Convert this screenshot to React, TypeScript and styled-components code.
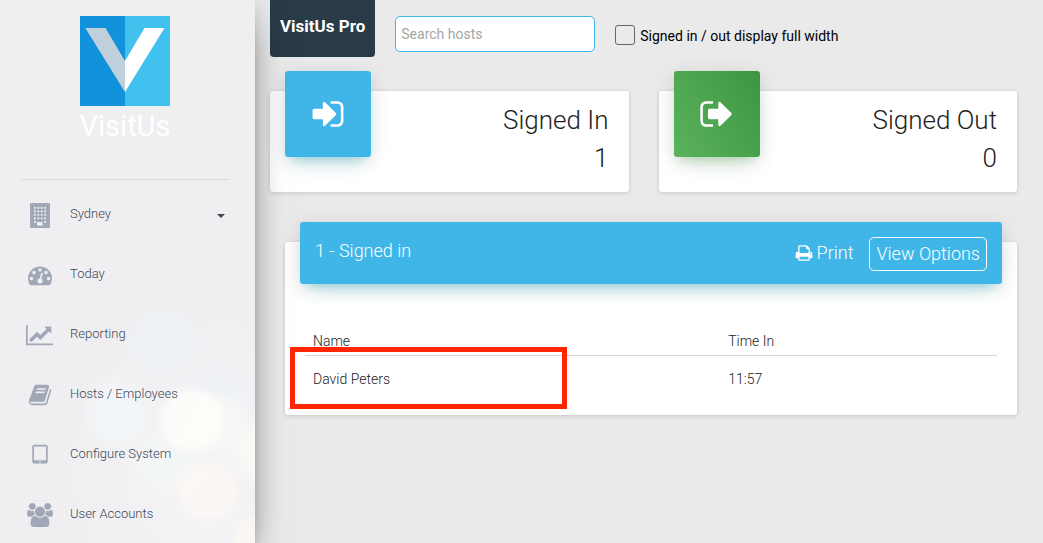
import React from "react";
import styled, { createGlobalStyle } from "styled-components";

const GlobalStyle = createGlobalStyle`
  * { box-sizing: border-box; }
  body {
    margin: 0;
    background: #eaeaea;
    color: #212121;
    font-family: Roboto, "Liberation Sans", sans-serif;
    font-size: 14px;
    font-weight: 300;
    line-height: 20px;
  }
  button, input, select { font: inherit; }
`;

const Page = styled.div`
  display: flex;
  min-height: 100vh;
`;

const Sidebar = styled.aside`
  flex: 0 0 255px;
  z-index: 1;
  color: #3c4858;
  background:
    radial-gradient(circle at 192px 420px, rgba(255, 253, 250, 0.9) 26px, rgba(255, 253, 250, 0) 36px),
    radial-gradient(circle at 208px 490px, rgba(252, 248, 245, 0.8) 24px, rgba(252, 248, 245, 0) 36px),
    radial-gradient(circle at 262px 545px, rgba(253, 247, 242, 0.8) 24px, rgba(253, 247, 242, 0) 36px),
    radial-gradient(circle at 216px 425px, rgba(250, 249, 247, 0.7) 22px, rgba(250, 249, 247, 0) 36px),
    radial-gradient(circle at 264px 450px, rgba(251, 250, 246, 0.8) 20px, rgba(251, 250, 246, 0) 40px),
    radial-gradient(circle at 116px 412px, rgba(243, 247, 249, 0.8) 20px, rgba(243, 247, 249, 0) 38px),
    radial-gradient(circle at 164px 342px, rgba(236, 242, 246, 0.8) 18px, rgba(236, 242, 246, 0) 36px),
    radial-gradient(circle at 168px 460px, rgba(243, 246, 247, 0.8) 20px, rgba(243, 246, 247, 0) 40px),
    radial-gradient(circle at 215px 400px, rgba(238, 241, 246, 0.8) 20px, rgba(238, 241, 246, 0) 40px),
    radial-gradient(circle at 220px 470px, rgba(243, 243, 245, 1) 60px, rgba(243, 243, 245, 0) 160px),
    #efeff1;
  box-shadow:
    0 16px 38px -12px rgba(0, 0, 0, 0.56),
    0 4px 25px rgba(0, 0, 0, 0.12),
    0 8px 10px -5px rgba(0, 0, 0, 0.2);
`;

const Brand = styled.a`
  display: flex;
  flex-direction: column;
  align-items: center;
  margin: 0 26px 0 21px;
  padding-top: 16px;
  height: 180px;
  border-bottom: 1px solid #d8d8da;
  color: #fff;
  font-size: 29px;
  font-weight: 400;
  line-height: 40px;
  text-decoration: none;
`;

const Nav = styled.nav`
  display: flex;
  flex-direction: column;
  padding: 4px 26px 0 21px;
`;

const NavLink = styled.a`
  display: flex;
  align-items: center;
  height: 60px;
  color: inherit;
  font-size: 13px;
  text-decoration: none;
`;

const NavIcon = styled.span`
  display: flex;
  justify-content: center;
  width: 37px;
  margin-right: 12px;
  padding-top: 2px;
  color: #a0a8b7;
`;

const Caret = styled.span`
  margin-left: auto;
  margin-right: 4px;
  margin-top: 4px;
  border: 4px solid transparent;
  border-top-color: #3c4858;
  border-bottom: 0;
`;

const Main = styled.main`
  flex: 1;
  min-width: 0;
  padding: 0 26px 0 15px;
`;

const Toolbar = styled.header`
  display: flex;
  align-items: flex-start;
  gap: 20px;
`;

const PlanBadge = styled.div`
  height: 57px;
  padding: 16px 10px;
  border-radius: 0 0 4px 4px;
  background: #293b47;
  color: #fff;
  font-size: 17px;
  font-weight: 700;
`;

const SearchInput = styled.input`
  width: 200px;
  height: 36px;
  margin-top: 16px;
  padding: 0 5px;
  border: 1px solid #40b6e8;
  border-radius: 5px;
  background: #fff;
  font-weight: 400;
  &::placeholder { color: #a5a5a5; opacity: 1; }
`;

const CheckLabel = styled.label`
  display: flex;
  align-items: center;
  gap: 5px;
  padding-top: 24px;
  color: #000;
  font-weight: 400;
`;

const CheckText = styled.span`
  padding-top: 2px;
`;

const Checkbox = styled.input`
  appearance: none;
  width: 20px;
  height: 20px;
  margin: 0;
  border: 1px solid #666;
  border-radius: 3px;
  &:checked { background: #40b6e8; }
`;

const Stats = styled.section`
  display: grid;
  grid-template-columns: 1fr 1fr;
  gap: 30px;
  margin-top: 34px;
`;

const Card = styled.article`
  border-radius: 3px;
  background: #fff;
  box-shadow: 0 1px 4px rgba(0, 0, 0, 0.16);
`;

const StatCard = styled(Card)`
  display: flex;
  justify-content: space-between;
  height: 101px;
  padding: 0 20px 0 15px;
`;

const StatIcon = styled.div<{ $green?: boolean }>`
  display: flex;
  align-items: center;
  justify-content: center;
  width: 86px;
  height: 86px;
  margin-top: -20px;
  border-radius: 3px;
  color: #fff;
  background: ${(p) => (p.$green ? "linear-gradient(60deg, #5bb25f, #3c963f)" : "#40b6e8")};
  box-shadow:
    0 12px 20px -10px ${(p) => (p.$green ? "rgba(76,175,80,.28)" : "rgba(0,172,193,.28)")},
    0 4px 20px rgba(0, 0, 0, 0.12),
    0 7px 8px -5px ${(p) => (p.$green ? "rgba(76,175,80,.2)" : "rgba(0,172,193,.2)")};
`;

const StatText = styled.h2`
  margin: 0;
  padding-top: 10px;
  font-size: 26px;
  font-weight: 300;
  line-height: 38px;
  text-align: right;
`;

const StatValue = styled.span`
  display: block;
`;

const Panel = styled(Card)`
  display: flow-root;
  margin: 50px 0 0 15px;
  padding: 0 15px 14px;
`;

const PanelHeader = styled.header`
  display: flex;
  align-items: flex-start;
  height: 62px;
  margin-top: -20px;
  padding: 15px;
  border-radius: 3px;
  background: #40b6e8;
  color: #fff;
  font-size: 18px;
  box-shadow:
    0 12px 20px -10px rgba(0, 172, 193, 0.28),
    0 4px 20px rgba(0, 0, 0, 0.12),
    0 7px 8px -5px rgba(0, 172, 193, 0.2);
`;

const PanelTitle = styled.h3`
  flex: 1;
  margin: 0;
  font-size: 18px;
  font-weight: 300;
  line-height: 28px;
`;

const PrintButton = styled.button`
  display: flex;
  align-items: center;
  gap: 4px;
  height: 32px;
  margin-right: 16px;
  padding: 0;
  border: 0;
  background: none;
  color: inherit;
`;

const OptionsButton = styled.button`
  height: 34px;
  padding: 0 6px;
  border: 1px solid #fff;
  border-radius: 5px;
  background: none;
  color: inherit;
`;

const Table = styled.table`
  width: calc(100% - 10px);
  margin: 43px 5px 0;
  border-collapse: separate;
  border-spacing: 0;
  table-layout: fixed;
`;

const HeadCell = styled.th`
  height: 29px;
  padding: 0 8px;
  border-bottom: 1px solid #d5d5d5;
  font-weight: 300;
  text-align: left;
  &:first-child { width: 60%; }
`;

const Cell = styled.td`
  position: relative;
  height: 45px;
  padding: 0 8px;
`;

const Highlight = styled.span`
  position: absolute;
  top: -9px;
  left: -15px;
  width: 277px;
  height: 62px;
  border: 5px solid #ff2500;
`;

const paths = {
  dashboard:
    "M384 1152q0-53-37.5-90.5t-90.5-37.5-90.5 37.5-37.5 90.5 37.5 90.5 90.5 37.5 90.5-37.5 37.5-90.5zm192-448q0-53-37.5-90.5t-90.5-37.5-90.5 37.5-37.5 90.5 37.5 90.5 90.5 37.5 90.5-37.5 37.5-90.5zm428 481l101-382q6-26-7.5-48.5t-38.5-29.5-48 6.5-30 39.5l-101 382q-60 5-107 43.5t-63 98.5q-20 77 20 146t117 89 146-20 89-117q16-60-6-117t-72-91zm660-33q0-53-37.5-90.5t-90.5-37.5-90.5 37.5-37.5 90.5 37.5 90.5 90.5 37.5 90.5-37.5 37.5-90.5zm-640-640q0-53-37.5-90.5t-90.5-37.5-90.5 37.5-37.5 90.5 37.5 90.5 90.5 37.5 90.5-37.5 37.5-90.5zm448 192q0-53-37.5-90.5t-90.5-37.5-90.5 37.5-37.5 90.5 37.5 90.5 90.5 37.5 90.5-37.5 37.5-90.5zm320 448q0 261-141 483-19 29-54 29h-1402q-35 0-54-29-141-221-141-483 0-182 71-348t191-286 286-191 348-71 348 71 286 191 191 286 71 348z",
  chart:
    "M2048 1536v128h-2048v-1536h128v1408h1920zm-128-1248v435q0 21-19.5 29.5t-35.5-7.5l-121-121-633 633q-10 10-23 10t-23-10l-233-233-416 416-192-192 585-585q10-10 23-10t23 10l233 233 464-464-121-121q-16-16-7.5-35.5t29.5-19.5h435q14 0 23 9t9 23z",
  book:
    "M1703 478q40 57 18 129l-275 906q-19 64-76.5 107.5t-122.5 43.5h-923q-77 0-148.5-53.5t-99.5-131.5q-24-67-2-127 0-4 3-27t4-37q1-8-3-21.5t-3-19.5q2-11 8-21t16.5-23.5 16.5-23.5q23-38 45-91.5t30-91.5q3-10 .5-30t-.5-28q3-11 17-28t17-23q21-36 42-92t25-90q1-9-2.5-32t.5-28q4-13 22-30.5t22-22.5q19-26 42.5-84.5t27.5-96.5q1-8-3-25.5t-2-26.5q2-8 9-18t18-23 17-21q8-12 16.5-30.5t15-35 16-36 19.5-32 26.5-23.5 36-11.5 47.5 5.5l-1 3q38-9 51-9h761q74 0 114 56t18 130l-274 906q-36 119-71.5 153.5t-128.5 34.5h-869q-27 0-38 15-11 16-1 43 24 70 144 70h923q29 0 56-15.5t35-41.5l300-987q7-22 5-57 38 15 59 43zm-1064 2q-4 13 2 22.5t20 9.5h608q13 0 25.5-9.5t16.5-22.5l21-64q4-13-2-22.5t-20-9.5h-608q-13 0-25.5 9.5t-16.5 22.5zm-83 256q-4 13 2 22.5t20 9.5h608q13 0 25.5-9.5t16.5-22.5l21-64q4-13-2-22.5t-20-9.5h-608q-13 0-25.5 9.5t-16.5 22.5z",
  tablet:
    "M960 1408q0-26-19-45t-45-19-45 19-19 45 19 45 45 19 45-19 19-45zm384-160v-960q0-13-9.5-22.5t-22.5-9.5h-832q-13 0-22.5 9.5t-9.5 22.5v960q0 13 9.5 22.5t22.5 9.5h832q13 0 22.5-9.5t9.5-22.5zm128-960v1088q0 66-47 113t-113 47h-832q-66 0-113-47t-47-113v-1088q0-66 47-113t113-47h832q66 0 113 47t47 113z",
  users:
    "M593 896q-162 5-265 128h-134q-82 0-138-40.5t-56-118.5q0-353 124-353 6 0 43.5 21t97.5 42.5 119 21.5q67 0 133-23-5 37-5 66 0 139 81 256zm1071 637q0 120-73 189.5t-194 69.5h-874q-121 0-194-69.5t-73-189.5q0-53 3.5-103.5t14-109 26.5-108.5 43-97.5 62-81 85.5-53.5 111.5-20q10 0 43 21.5t73 48 107 48 135 21.5 135-21.5 107-48 73-48 43-21.5q61 0 111.5 20t85.5 53.5 62 81 43 97.5 26.5 108.5 14 109 3.5 103.5zm-1024-1277q0 106-75 181t-181 75-181-75-75-181 75-181 181-75 181 75 75 181zm704 384q0 159-112.5 271.5t-271.5 112.5-271.5-112.5-112.5-271.5 112.5-271.5 271.5-112.5 271.5 112.5 112.5 271.5zm576 225q0 78-56 118.5t-138 40.5h-134q-103-123-265-128 81-117 81-256 0-29-5-66 66 23 133 23 59 0 119-21.5t97.5-42.5 43.5-21q124 0 124 353zm-128-609q0 106-75 181t-181 75-181-75-75-181 75-181 181-75 181 75 75 181z",
  print:
    "M448 1536h896v-256h-896v256zm0-640h896v-384h-160q-40 0-68-28t-28-68v-160h-640v640zm1152 64q0-26-19-45t-45-19-45 19-19 45 19 45 45 19 45-19 19-45zm128 0v416q0 13-9.5 22.5t-22.5 9.5h-224v160q0 40-28 68t-68 28h-960q-40 0-68-28t-28-68v-160h-224q-13 0-22.5-9.5t-9.5-22.5v-416q0-79 56.5-135.5t135.5-56.5h64v-544q0-40 28-68t68-28h672q40 0 88 20t76 48l152 152q28 28 48 76t20 88v256h64q79 0 135.5 56.5t56.5 135.5z",
  signIn:
    "M1312 896q0 26-19 45l-544 544q-19 19-45 19t-45-19-19-45v-288h-448q-26 0-45-19t-19-45v-384q0-26 19-45t45-19h448v-288q0-26 19-45t45-19 45 19l544 544q19 19 19 45zm352-352v704q0 119-84.5 203.5t-203.5 84.5h-320q-13 0-22.5-9.5t-9.5-22.5q0-4-1-20t-.5-26.5 3-23.5 10-19.5 20.5-6.5h320q66 0 113-47t47-113v-704q0-66-47-113t-113-47h-312l-11.5-1-11.5-3-8-5.5-7-9-2-13.5q0-4-1-20t-.5-26.5 3-23.5 10-19.5 20.5-6.5h320q119 0 203.5 84.5t84.5 203.5z",
  signOut:
    "M704 1440q0 4 1 20t.5 26.5-3 23.5-10 19.5-20.5 6.5h-320q-119 0-203.5-84.5t-84.5-203.5v-704q0-119 84.5-203.5t203.5-84.5h320q13 0 22.5 9.5t9.5 22.5q0 4 1 20t.5 26.5-3 23.5-10 19.5-20.5 6.5h-320q-66 0-113 47t-47 113v704q0 66 47 113t113 47h312l11.5 1 11.5 3 8 5.5 7 9 2 13.5zm928-544q0 26-19 45l-544 544q-19 19-45 19t-45-19-19-45v-288h-448q-26 0-45-19t-19-45v-384q0-26 19-45t45-19h448v-288q0-26 19-45t45-19 45 19l544 544q19 19 19 45z",
};

function Icon({ name, size, box = 1792 }: { name: keyof typeof paths; size: number; box?: number }) {
  return (
    <svg width={Math.round((size * box) / 1792)} height={size} viewBox={`0 0 ${box} 1792`} fill="currentColor" aria-hidden="true">
      <path d={paths[name]} />
    </svg>
  );
}

function BuildingIcon() {
  return (
    <svg width="20" height="25" viewBox="0 0 20 25" aria-hidden="true">
      <rect width="20" height="25" rx="1" fill="currentColor" />
      {[4, 7.5, 11, 14.5, 18].map((y) =>
        [4, 7.4, 10.8, 14.2].map((x) => <rect key={`${x}-${y}`} x={x} y={y} width="1.8" height="1.8" fill="#efeff1" />)
      )}
      <rect x="6.400" y="17.500" width="7" height="2" fill="currentColor" />
      <rect x="7" y="19" width="5.600" height="3.600" fill="#efeff1" />
    </svg>
  );
}

function Logo() {
  return (
    <svg width="90" height="90" viewBox="0 0 90 90" aria-hidden="true">
      <path fill="#1192da" d="M0 0h45v90H0z" />
      <path fill="#40c1ee" d="M45 0h45v90H45z" />
      <path fill="#bfcfdb" d="M5.300 12H25.500L45 45v31z" />
      <path fill="#fff" d="M84.500 12H64.500L45 45v31z" />
    </svg>
  );
}

const navItems = [
  { label: "Sydney", icon: <BuildingIcon />, caret: true },
  { label: "Today", icon: <Icon name="dashboard" size={24} /> },
  { label: "Reporting", icon: <Icon name="chart" size={24} box={2048} /> },
  { label: "Hosts / Employees", icon: <Icon name="book" size={24} /> },
  { label: "Configure System", icon: <Icon name="tablet" size={24} /> },
  { label: "User Accounts", icon: <Icon name="users" size={24} box={1920} /> },
];

export default function App() {
  return (
    <>
      <GlobalStyle />
      <Page>
        <Sidebar>
          <Brand href="#">
            <Logo />
            VisitUs
          </Brand>
          <Nav>
            {navItems.map((item) => (
              <NavLink href="#" key={item.label}>
                <NavIcon>{item.icon}</NavIcon>
                {item.label}
                {item.caret && <Caret />}
              </NavLink>
            ))}
          </Nav>
        </Sidebar>
        <Main>
          <Toolbar>
            <PlanBadge>VisitUs Pro</PlanBadge>
            <SearchInput type="search" placeholder="Search hosts" aria-label="Search hosts" />
            <CheckLabel>
              <Checkbox type="checkbox" />
              <CheckText>Signed in / out display full width</CheckText>
            </CheckLabel>
          </Toolbar>
          <Stats>
            <StatCard>
              <StatIcon><Icon name="signIn" size={36} /></StatIcon>
              <StatText>Signed In<StatValue>1</StatValue></StatText>
            </StatCard>
            <StatCard>
              <StatIcon $green><Icon name="signOut" size={36} /></StatIcon>
              <StatText>Signed Out<StatValue>0</StatValue></StatText>
            </StatCard>
          </Stats>
          <Panel>
            <PanelHeader>
              <PanelTitle>1 - Signed in</PanelTitle>
              <PrintButton type="button"><Icon name="print" size={18} />Print</PrintButton>
              <OptionsButton type="button">View Options</OptionsButton>
            </PanelHeader>
            <Table>
              <thead>
                <tr><HeadCell scope="col">Name</HeadCell><HeadCell scope="col">Time In</HeadCell></tr>
              </thead>
              <tbody>
                <tr>
                  <Cell>David Peters<Highlight /></Cell>
                  <Cell>11:57</Cell>
                </tr>
              </tbody>
            </Table>
          </Panel>
        </Main>
      </Page>
    </>
  );
}
